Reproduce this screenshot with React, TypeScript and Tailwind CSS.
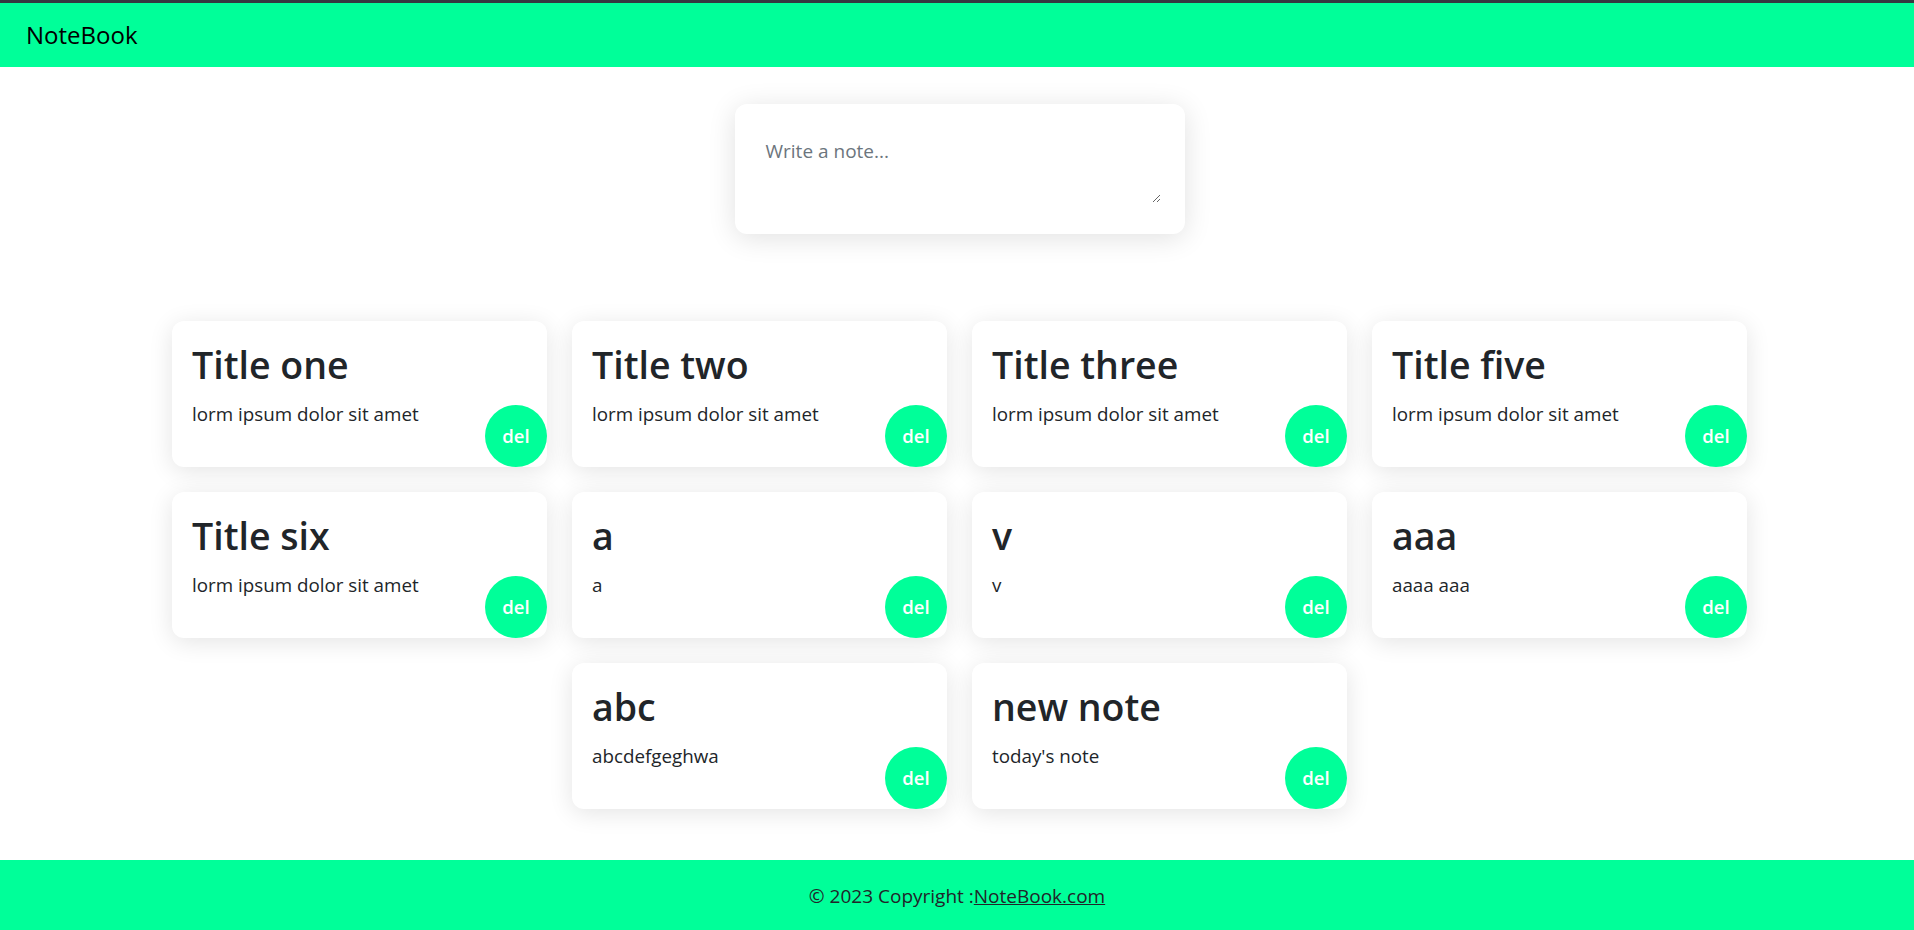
import { useState } from 'react'

type Note = { id: number; title: string; content: string }

const initialNotes: Note[] = [
  { id: 1, title: 'Title one', content: 'lorm ipsum dolor sit amet' },
  { id: 2, title: 'Title two', content: 'lorm ipsum dolor sit amet' },
  { id: 3, title: 'Title three', content: 'lorm ipsum dolor sit amet' },
  { id: 5, title: 'Title five', content: 'lorm ipsum dolor sit amet' },
  { id: 6, title: 'Title six', content: 'lorm ipsum dolor sit amet' },
  { id: 7, title: 'a', content: 'a' },
  { id: 8, title: 'v', content: 'v' },
  { id: 9, title: 'aaa', content: 'aaaa aaa' },
  { id: 10, title: 'abc', content: 'abcdefgeghwa' },
  { id: 11, title: 'new note', content: "today's note" },
]

function NoteCard({ note, onDelete }: { note: Note; onDelete: () => void }) {
  return (
    <div className="relative w-[375px] h-[146px] bg-white rounded-xl shadow-[0_4px_24px_rgba(0,0,0,0.11)] px-5 pt-[20px]">
      <h2 className="text-[37.5px] leading-[48px] font-semibold text-[#212529] mb-[10px]">{note.title}</h2>
      <p className="text-[18.8px] leading-[30px] text-[#212529]">{note.content}</p>
      <button
        onClick={onDelete}
        className="absolute right-0 bottom-0 w-[62px] h-[62px] rounded-full bg-[#00ff99] text-white text-[18.5px] font-semibold flex items-center justify-center"
      >
        del
      </button>
    </div>
  )
}

export default function App() {
  const [notes, setNotes] = useState(initialNotes)

  return (
    <div className="min-h-screen flex flex-col bg-white font-['Open_Sans',sans-serif] text-[#212529]">
      <div className="h-[3px] bg-[#343a40]" />
      <nav className="h-[64px] bg-[#00ff99] flex items-center px-[26px]">
        <span className="text-[24px] text-black">NoteBook</span>
      </nav>

      <div className="flex justify-center pt-[37px] pl-[5px]">
        <div className="w-[450px] h-[130px] bg-white rounded-xl shadow-[0_4px_28px_rgba(0,0,0,0.12)] pl-[24px] pr-[24px] pt-[32px] pb-[31px]">
          <textarea
            placeholder="Write a note..."
            className="w-full h-full text-[19px] leading-[30px] px-[7px] outline-none border-0 bg-transparent placeholder:text-[#6c757d] text-[#212529]"
          />
        </div>
      </div>

      <main className="flex justify-center pl-[5px] pt-[87px] pb-[51px]">
        <div className="w-[1575px] flex flex-wrap justify-center gap-[25px]">
          {notes.map((n) => (
            <NoteCard key={n.id} note={n} onDelete={() => setNotes(notes.filter((x) => x.id !== n.id))} />
          ))}
        </div>
      </main>

      <footer className="mt-auto h-[72px] bg-[#00ff99] flex items-center justify-center text-[19px] text-[#212529]">
        <span>
          © 2023 Copyright :<a href="#" className="underline text-[#212529]">NoteBook.com</a>
        </span>
      </footer>
    </div>
  )
}
